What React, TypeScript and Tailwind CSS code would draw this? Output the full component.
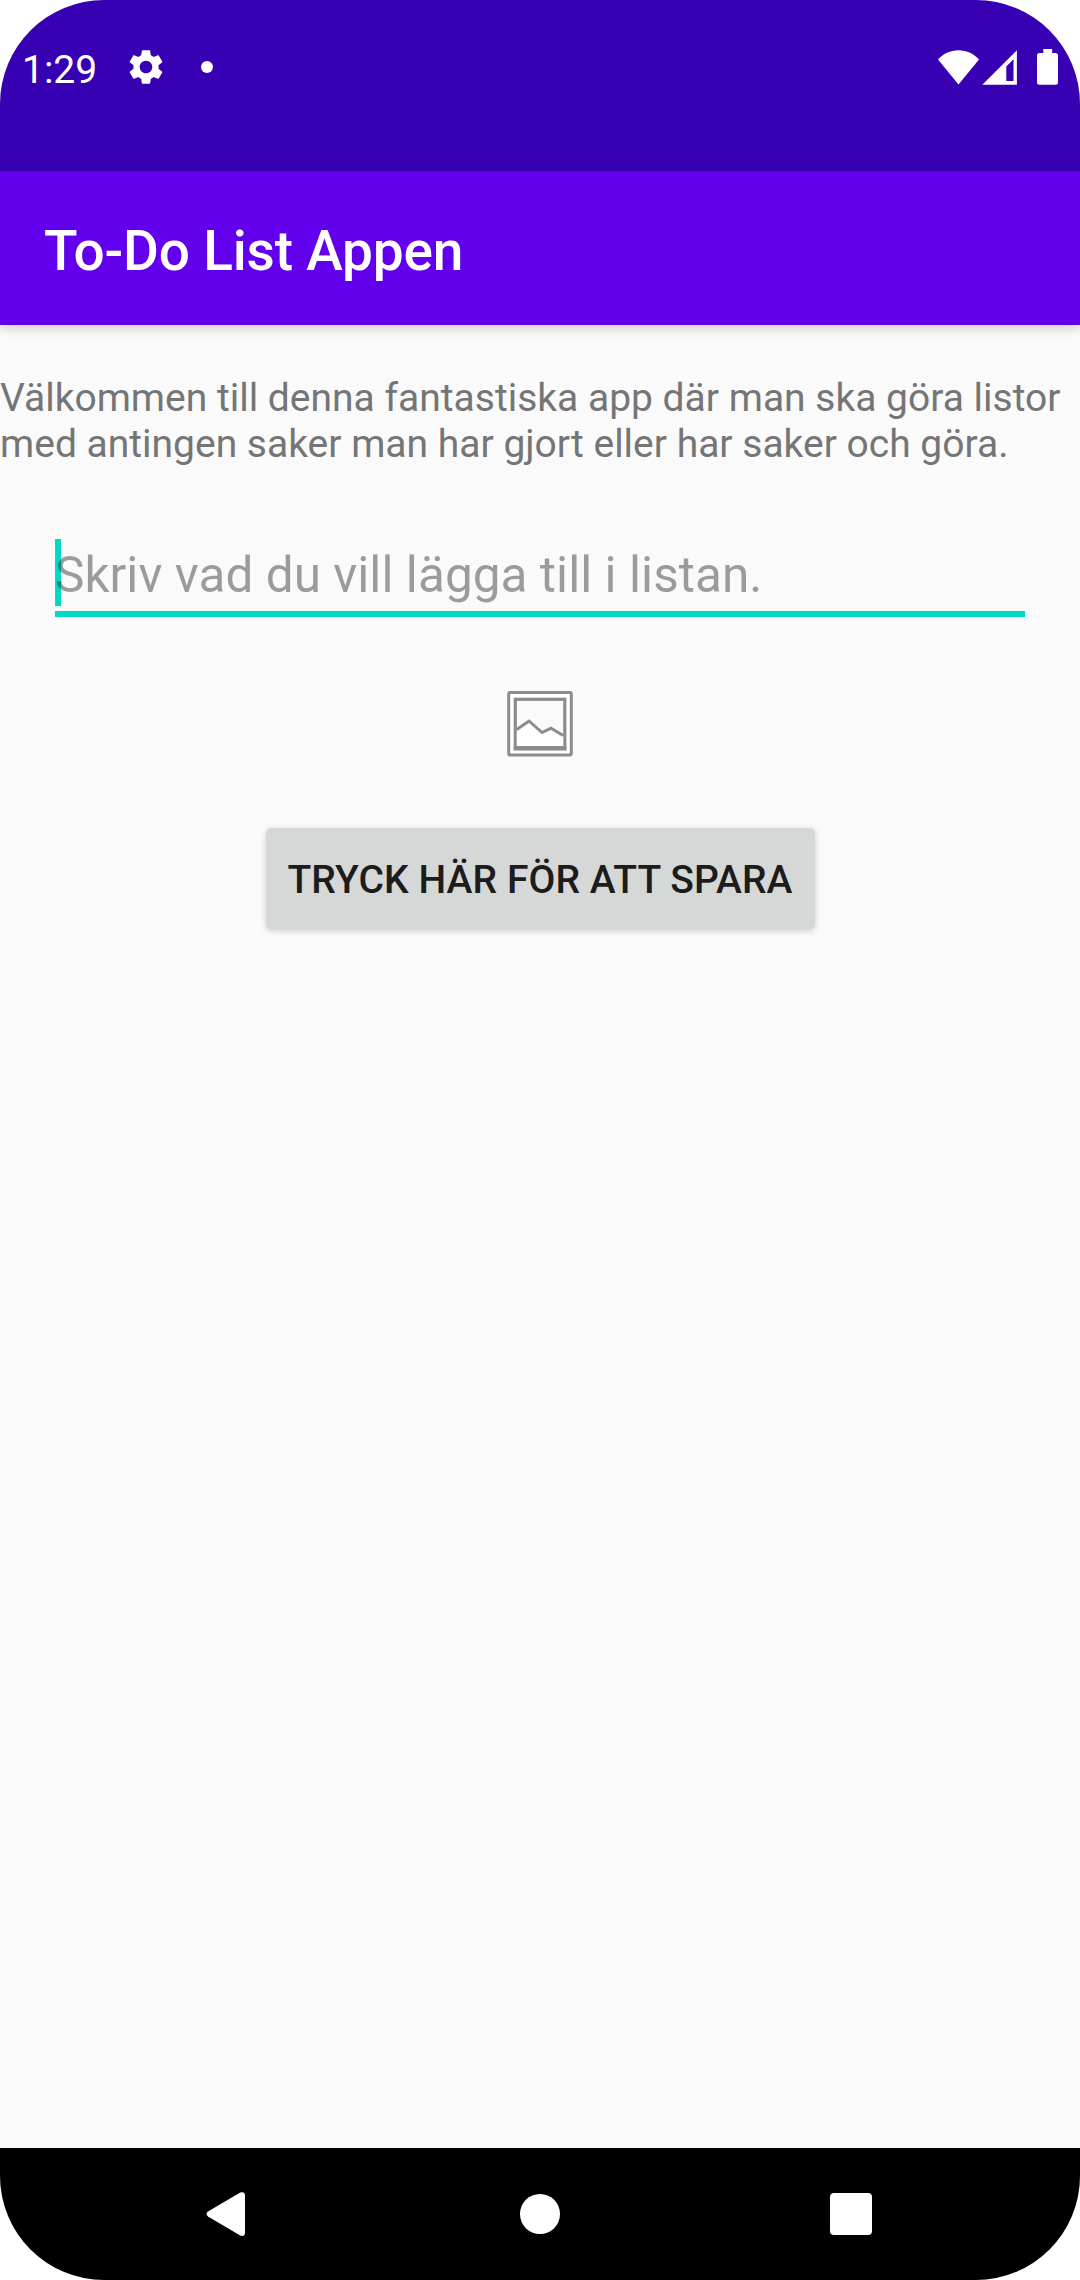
import React from "react";
import { MdSettings } from "react-icons/md";

function StatusBar() {
  return (
    <div className="flex h-[171px] shrink-0 justify-between bg-[#3700b3] text-white">
      <div className="mt-[45px] ml-[22px] flex h-[44px] items-center">
        <span className="w-[75px] pt-[5px] text-[39px] leading-[44px] whitespace-nowrap">1:29</span>
        <MdSettings className="ml-[28px] h-[42px] w-[42px]" />
        <span className="ml-[34px] h-3 w-3 rounded-full bg-white" />
      </div>
      <svg className="mt-[45px] mr-[20px] h-[44px] w-[124px]" viewBox="936 45 124 44" fill="currentColor">
        <path d="M958.5 84.5 938 59.5c5-5.500 12-9.200 20.500-9.200s15.500 3.700 20.500 9.200z" />
        <path fillRule="evenodd" d="M982.300 84.800 1016.900 50.200V84.800zM1006.300 81h7.200V59.200l-7.200 7.200z" />
        <path d="M1043.300 49h8.900v4h3.300a2.500 2.500 0 0 1 2.500 2.500v26.700a2.500 2.500 0 0 1-2.500 2.500h-16a2.500 2.500 0 0 1-2.500-2.500V55.500a2.500 2.500 0 0 1 2.500-2.500h3.800z" />
      </svg>
    </div>
  );
}

function PictureIcon() {
  return (
    <svg className="h-[66px] w-[66px]" viewBox="0 0 66 66" fill="none" stroke="#8c8c8c">
      <rect x="1.700" y="1.500" width="62.600" height="62.600" rx="1.500" fill="#fff" strokeWidth="3" />
      <rect x="8.300" y="8.300" width="49.500" height="49.500" fill="#fafafa" strokeWidth="3.200" />
      <path d="M9.800 38.500 22 30l13 11.500 9-4.300 12.200 7.300V56H9.800z" fill="#fff" stroke="none" />
      <path d="M9.800 38.500 22 30l13 11.500 9-4.300 12.200 7.300" strokeWidth="2.900" />
      <path d="M6.700 57.200h52.700" strokeWidth="4.200" />
    </svg>
  );
}

function NavigationBar() {
  return (
    <div className="flex h-[132px] shrink-0 items-center justify-between bg-black pr-[208px] pl-[206px]">
      <svg className="h-[46px] w-[40px]" viewBox="0 0 40 46" fill="#fff">
        <path d="M2 20.600 34.200 1.500Q39 0 39 4.500V41.500Q39 46 34.200 44.500L2 25.400Q-1 23 2 20.600z" />
      </svg>
      <span className="ml-[3px] h-[40px] w-[40px] rounded-full bg-white" />
      <span className="h-[42px] w-[42px] rounded-[4px] bg-white" />
    </div>
  );
}

export default function App() {
  return (
    <div className="h-[2280px] w-[1080px] bg-white font-['Roboto',sans-serif]">
      <div className="flex h-full flex-col overflow-hidden rounded-[104px] bg-[#fafafa]">
        <StatusBar />
        <header className="z-10 flex h-[154px] shrink-0 items-center bg-[#6200ee] pt-[6px] pl-[44px] shadow-[0_4px_10px_rgba(0,0,0,0.16)]">
          <h1 className="text-[55px] leading-[64px] font-medium tracking-[-0.2px] text-white">To-Do List Appen</h1>
        </header>
        <main className="flex flex-1 flex-col items-center">
          <p className="mt-[50px] w-full text-[39px] leading-[46px] whitespace-nowrap text-[#757575]">
            Välkommen till denna fantastiska app där man ska göra listor
            <br />
            med antingen saker man har gjort eller har saker och göra.
          </p>
          <div className="relative mt-[72px] h-[78px] w-[970px] border-b-[6px] border-[#03dac5]">
            <span className="absolute top-0 left-0 h-[67px] w-[6px] bg-[#03dac5]" />
            <span className="relative block pt-[6px] text-[49.5px] leading-[60px] tracking-[0.04px] whitespace-nowrap text-black/38">
              Skriv vad du vill lägga till i listan.
            </span>
          </div>
          <div className="mt-[74px]">
            <PictureIcon />
          </div>
          <button className="mt-[71px] h-[101px] w-[549px] rounded-[5px] bg-[#d6d7d7] pt-[4px] text-[39px] font-medium tracking-[0.08px] whitespace-nowrap text-[#1c1c1c] shadow-[0_2px_6px_rgba(0,0,0,0.18)]">
            TRYCK HÄR FÖR ATT SPARA
          </button>
        </main>
        <NavigationBar />
      </div>
    </div>
  );
}
